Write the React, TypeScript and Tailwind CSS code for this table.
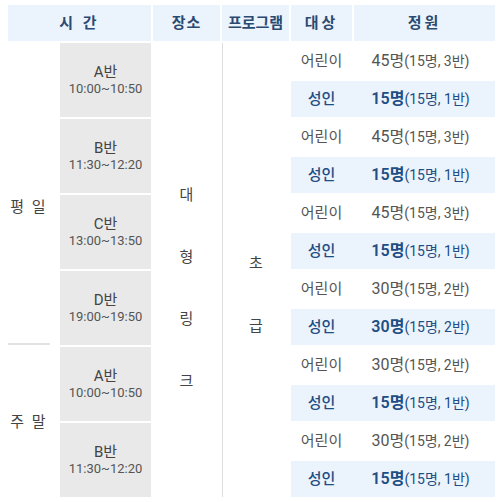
import React from 'react';

type Row = { target: '어린이' | '성인'; total: string; detail: string };

const classes = [
    { name: 'A반', time: '10:00~10:50' },
    { name: 'B반', time: '11:30~12:20' },
    { name: 'C반', time: '13:00~13:50' },
    { name: 'D반', time: '19:00~19:50' },
    { name: 'A반', time: '10:00~10:50' },
    { name: 'B반', time: '11:30~12:20' },
];

const rows: Row[] = [
    { target: '어린이', total: '45명', detail: '(15명, 3반)' },
    { target: '성인', total: '15명', detail: '(15명, 1반)' },
    { target: '어린이', total: '45명', detail: '(15명, 3반)' },
    { target: '성인', total: '15명', detail: '(15명, 1반)' },
    { target: '어린이', total: '45명', detail: '(15명, 3반)' },
    { target: '성인', total: '15명', detail: '(15명, 1반)' },
    { target: '어린이', total: '30명', detail: '(15명, 2반)' },
    { target: '성인', total: '30명', detail: '(15명, 2반)' },
    { target: '어린이', total: '30명', detail: '(15명, 2반)' },
    { target: '성인', total: '15명', detail: '(15명, 1반)' },
    { target: '어린이', total: '30명', detail: '(15명, 2반)' },
    { target: '성인', total: '15명', detail: '(15명, 1반)' },
];

export default function App() {
    return (
        <div
            className="w-[500px] h-[502px] bg-white overflow-hidden pt-[5px] pl-[8px]"
            style={{ fontFamily: 'Roboto, "Noto Sans CJK KR", sans-serif' }}
        >
            <div className="grid grid-cols-[50px_91px_67px_67px_61px_141px] grid-rows-[repeat(13,36px)] gap-[2px]">
                {/* header */}
                <div className="col-span-2 bg-[#ebf3fc] flex items-center justify-center text-[15px] font-semibold text-[#2b4a72] tracking-[3px]">시 간</div>
                <div className="bg-[#ebf3fc] flex items-center justify-center text-[15px] font-semibold text-[#2b4a72] tracking-[1px]">장소</div>
                <div className="bg-[#ebf3fc] flex items-center justify-center text-[15px] font-semibold text-[#2b4a72]">프로그램</div>
                <div className="bg-[#ebf3fc] flex items-center justify-center text-[15px] font-semibold text-[#2b4a72] tracking-[3px]">대상</div>
                <div className="bg-[#ebf3fc] flex items-center justify-center text-[15px] font-semibold text-[#2b4a72] tracking-[3px]">정원</div>

                {/* day groups */}
                <div className="col-start-1 row-start-2 row-span-8 flex flex-col">
                    <div className="flex-1 w-[42px] border-b-2 border-[#e2e2e2] pt-[154px] text-center text-[15px] leading-[20px] text-[#444] tracking-[2px]">평 일</div>
                </div>
                <div className="col-start-1 row-start-10 row-span-4 flex items-center">
                    <div className="w-[42px] text-center text-[15px] leading-[20px] text-[#444] tracking-[2px]">주 말</div>
                </div>

                {/* class slots */}
                {classes.map((c, i) => (
                    <div
                        key={i}
                        className="col-start-2 row-span-2 bg-[#e9e9e9] flex flex-col items-center justify-center text-[#444]"
                        style={{ gridRowStart: 2 + i * 2 }}
                    >
                        <span className="text-[15px] leading-[18px]">{c.name}</span>
                        <span className="text-[13px] leading-[16px] text-[#555]">{c.time}</span>
                    </div>
                ))}

                {/* place */}
                <div className="col-start-3 row-start-2 row-span-12 flex flex-col items-center pt-[142px] gap-[42px] text-[15px] leading-[20px] text-[#444]">
                    <span>대</span>
                    <span>형</span>
                    <span>링</span>
                    <span>크</span>
                </div>

                {/* program */}
                <div className="col-start-4 row-start-2 row-span-12 border-l border-[#dedede] flex flex-col items-center pt-[210px] gap-[43px] text-[15px] leading-[20px] text-[#444]">
                    <span>초</span>
                    <span>급</span>
                </div>

                {/* target + capacity */}
                {rows.map((r, i) => {
                    const adult = r.target === '성인';
                    return (
                        <div
                            key={i}
                            className={`col-start-5 col-span-2 flex items-center ${adult ? 'bg-[#ebf3fc]' : ''}`}
                            style={{ gridRowStart: 2 + i }}
                        >
                            <div className={`w-[61px] mr-[2px] text-center text-[15px] ${adult ? 'font-medium text-[#214d85]' : 'text-[#555]'}`}>
                                {r.target}
                            </div>
                            <div className={`flex-1 flex items-baseline justify-center pr-[8px] ${adult ? 'text-[#214d85]' : 'text-[#555]'}`}>
                                <span className={`text-[16px] ${adult ? 'font-semibold' : 'font-normal'}`}>{r.total}</span>
                                <span className="text-[14px]">{r.detail}</span>
                            </div>
                        </div>
                    );
                })}
            </div>
        </div>
    );
}
